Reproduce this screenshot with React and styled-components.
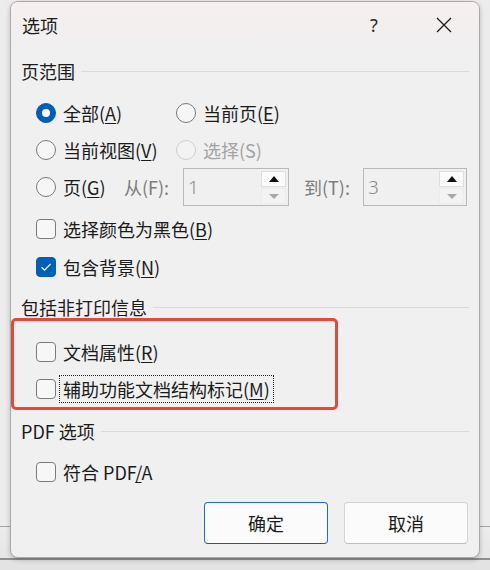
import React from "react";
import styled, { createGlobalStyle, css } from "styled-components";

const Global = createGlobalStyle`
  html, body { margin: 0; padding: 0; }
  body {
    height: 570px;
    overflow: hidden;
    font-family: "Noto Sans CJK SC", "Noto Sans", sans-serif;
    color: #1b1b1b;
    background: linear-gradient(to bottom,
      #ececec 0, #ececec 526px,
      #a3a3a3 526px, #a3a3a3 527px,
      #ececec 527px, #e6e6e6 558px,
      #8f8f8f 558px, #8f8f8f 560px,
      #e3e3e3 560px, #e3e3e3 100%);
  }
`;

const Desktop = styled.div`
  box-sizing: border-box;
  height: 570px;
  padding: 1px 10px 0;
`;

const Dialog = styled.div`
  box-sizing: border-box;
  width: 470px;
  height: 557px;
  border: 1px solid #a9a9a9;
  border-radius: 8px;
  background: #f0f0f0;
  box-shadow: 0 2px 5px rgba(0, 0, 0, 0.22);
  overflow: hidden;
  display: flex;
  flex-direction: column;
`;

const TitleBar = styled.div`
  height: 45px;
  flex: none;
  display: flex;
  align-items: center;
  padding: 0 10px 0 11px;
  background: linear-gradient(to bottom, #f7efef, #f2efef 70%, #f0f0f0);
`;

const Title = styled.div`
  font-size: 18px;
  line-height: 24px;
  flex: 1;
`;

const TitleButton = styled.div`
  width: ${(p) => p.$w}px;
  height: 40px;
  display: flex;
  align-items: center;
  justify-content: center;
  font-size: 18px;
  font-family: "Noto Sans", sans-serif;
  color: #2a2a2a;
  margin-left: ${(p) => p.$ml || 0}px;
`;

const Content = styled.div`
  display: flex;
  flex-direction: column;
  padding: 0 10px;
  flex: 1;
`;

const SectionHeader = styled.div`
  display: flex;
  align-items: center;
  height: 22px;
  margin-top: ${(p) => p.$mt}px;
  font-size: 18px;
  line-height: 22px;
  white-space: nowrap;
  &::after {
    content: "";
    flex: 1;
    height: 1px;
    margin-left: 6px;
    background: #dadada;
  }
`;

const Group = styled.div`
  display: flex;
  flex-direction: column;
  padding-left: 15px;
  margin-top: ${(p) => p.$mt || 0}px;
`;

const Row = styled.div`
  display: flex;
  align-items: center;
  height: ${(p) => p.$h || 37}px;
`;

const GridRow = styled(Row)`
  display: grid;
  grid-template-columns: 140px 1fr;
  align-items: center;
`;

const Option = styled.div`
  display: flex;
  align-items: center;
  width: ${(p) => (p.$w ? `${p.$w}px` : "auto")};
  color: ${(p) => (p.$disabled ? "#a3a3a3" : "#1b1b1b")};
`;

const Radio = styled.span`
  box-sizing: border-box;
  width: 20px;
  height: 20px;
  flex: none;
  border-radius: 50%;
  display: flex;
  align-items: center;
  justify-content: center;
  ${(p) =>
    p.$checked
      ? css`
          background: #005fb8;
          border: 1px solid #005fb8;
          &::after {
            content: "";
            width: 8px;
            height: 8px;
            border-radius: 50%;
            background: #fff;
          }
        `
      : p.$disabled
      ? css`
          background: #f3f3f3;
          border: 1px solid #cfcfcf;
        `
      : css`
          background: #f6f6f6;
          border: 1px solid #7a7a7a;
        `}
`;

const Box = styled.span`
  box-sizing: border-box;
  width: 20px;
  height: 20px;
  flex: none;
  border-radius: 4px;
  display: flex;
  align-items: center;
  justify-content: center;
  background: ${(p) => (p.$checked ? "#005fb8" : "#f7f7f7")};
  border: 1px solid ${(p) => (p.$checked ? "#005fb8" : "#7a7a7a")};
`;

const Label = styled.span`
  font-size: 18px;
  line-height: 24px;
  white-space: nowrap;
  margin-left: 3px;
  padding: 1px 3px;
  border: 1px dotted ${(p) => (p.$focus ? "#222" : "transparent")};
  u {
    text-decoration: underline;
    text-underline-offset: 2px;
    text-decoration-thickness: 1px;
  }
`;

const FieldLabel = styled.span`
  width: 59px;
  flex: none;
  font-size: 18px;
  line-height: 24px;
  color: #7d7d7d;
  margin-left: ${(p) => p.$ml || 0}px;
  white-space: nowrap;
`;

const Spin = styled.div`
  box-sizing: border-box;
  width: ${(p) => p.$w}px;
  height: 38px;
  flex: none;
  display: flex;
  border: 1px solid #b9b9b9;
  background: #f0f0f0;
  padding: 2px 2px 1px 0;
`;

const SpinValue = styled.div`
  flex: 1;
  font-family: "Noto Sans", sans-serif;
  font-size: 19px;
  line-height: 32px;
  color: #8a8a8a;
  padding-left: 4px;
  font-weight: 300;
`;

const SpinButtons = styled.div`
  width: 25px;
  display: flex;
  flex-direction: column;
  gap: 1px;
`;

const SpinButton = styled.div`
  flex: 1;
  display: flex;
  align-items: center;
  justify-content: center;
  box-sizing: border-box;
  border: 1px solid ${(p) => (p.$active ? "#dedede" : "#ececec")};
  background: ${(p) => (p.$active ? "#fbfbfb" : "#f3f3f3")};
`;

const Tri = styled.span`
  width: 0;
  height: 0;
  border-left: 5px solid transparent;
  border-right: 5px solid transparent;
  ${(p) =>
    p.$down
      ? css`border-top: 5px solid #a8a8a8;`
      : css`border-bottom: 6px solid #111;`}
`;

const Highlight = styled.div`
  box-sizing: border-box;
  width: 327px;
  margin-left: -10px;
  border: 3px solid #e5493b;
  border-radius: 5px;
  padding: 12px 0 0 22px;
  display: flex;
  flex-direction: column;
`;

const ButtonRow = styled.div`
  display: flex;
  justify-content: flex-end;
  gap: 16px;
  padding-right: 1px;
  margin-top: 12px;
`;

const Button = styled.div`
  box-sizing: border-box;
  width: 124px;
  height: 42px;
  display: flex;
  align-items: center;
  justify-content: center;
  border-radius: 4px;
  font-size: 18px;
  background: #fbfbfb;
  border: 1px solid ${(p) => (p.$primary ? "#1a6fc0" : "#d3d3d3")};
  border-bottom-color: ${(p) => (p.$primary ? "#0a5fb0" : "#bdbdbd")};
`;

const Check = () => (
  <svg width="12" height="10" viewBox="0 0 12 10">
    <path d="M1.5 5.2 L4.6 8.2 L10.6 1.8" fill="none" stroke="#fff" strokeWidth="1.2" />
  </svg>
);

const RadioOpt = ({ checked, disabled, children, w }) => (
  <Option $disabled={disabled} $w={w}>
    <Radio $checked={checked} $disabled={disabled} />
    <Label>{children}</Label>
  </Option>
);

const CheckOpt = ({ checked, focus, children }) => (
  <Option>
    <Box $checked={checked}>{checked && <Check />}</Box>
    <Label $focus={focus}>{children}</Label>
  </Option>
);

const SpinBox = ({ value, w }) => (
  <Spin $w={w}>
    <SpinValue>{value}</SpinValue>
    <SpinButtons>
      <SpinButton $active>
        <Tri />
      </SpinButton>
      <SpinButton>
        <Tri $down />
      </SpinButton>
    </SpinButtons>
  </Spin>
);

export default function App() {
  return (
    <>
      <Global />
      <Desktop>
        <Dialog>
          <TitleBar>
            <Title>选项</Title>
            <TitleButton $w={40}>?</TitleButton>
            <TitleButton $w={50} $ml={25}>
              <svg width="16" height="16" viewBox="0 0 16 16">
                <path d="M1 1 L15 15 M15 1 L1 15" stroke="#1b1b1b" strokeWidth="1.3" fill="none" />
              </svg>
            </TitleButton>
          </TitleBar>
          <Content>
            <SectionHeader $mt={13}>页范围</SectionHeader>
            <Group $mt={12}>
              <GridRow>
                <RadioOpt checked>
                  全部(<u>A</u>)
                </RadioOpt>
                <RadioOpt>
                  当前页(<u>E</u>)
                </RadioOpt>
              </GridRow>
              <GridRow>
                <RadioOpt>
                  当前视图(<u>V</u>)
                </RadioOpt>
                <RadioOpt disabled>选择(S)</RadioOpt>
              </GridRow>
              <Row $h={38}>
                <RadioOpt w={88}>
                  页(<u>G</u>)
                </RadioOpt>
                <FieldLabel>从(F):</FieldLabel>
                <SpinBox value="1" w={106} />
                <FieldLabel $ml={15}>到(T):</FieldLabel>
                <SpinBox value="3" w={104} />
              </Row>
            </Group>
            <Group $mt={4}>
              <Row $h={38}>
                <CheckOpt>
                  选择颜色为黑色(<u>B</u>)
                </CheckOpt>
              </Row>
              <Row $h={38}>
                <CheckOpt checked>
                  包含背景(<u>N</u>)
                </CheckOpt>
              </Row>
            </Group>
            <SectionHeader $mt={10}>包括非打印信息</SectionHeader>
            <Highlight>
              <Row>
                <CheckOpt>
                  文档属性(<u>R</u>)
                </CheckOpt>
              </Row>
              <Row>
                <CheckOpt focus>
                  辅助功能文档结构标记(<u>M</u>)
                </CheckOpt>
              </Row>
            </Highlight>
            <SectionHeader $mt={10}>PDF 选项</SectionHeader>
            <Group $mt={11}>
              <Row>
                <CheckOpt>
                  符合 PDF<u>/</u>A
                </CheckOpt>
              </Row>
            </Group>
            <ButtonRow>
              <Button $primary>确定</Button>
              <Button>取消</Button>
            </ButtonRow>
          </Content>
        </Dialog>
      </Desktop>
    </>
  );
}
